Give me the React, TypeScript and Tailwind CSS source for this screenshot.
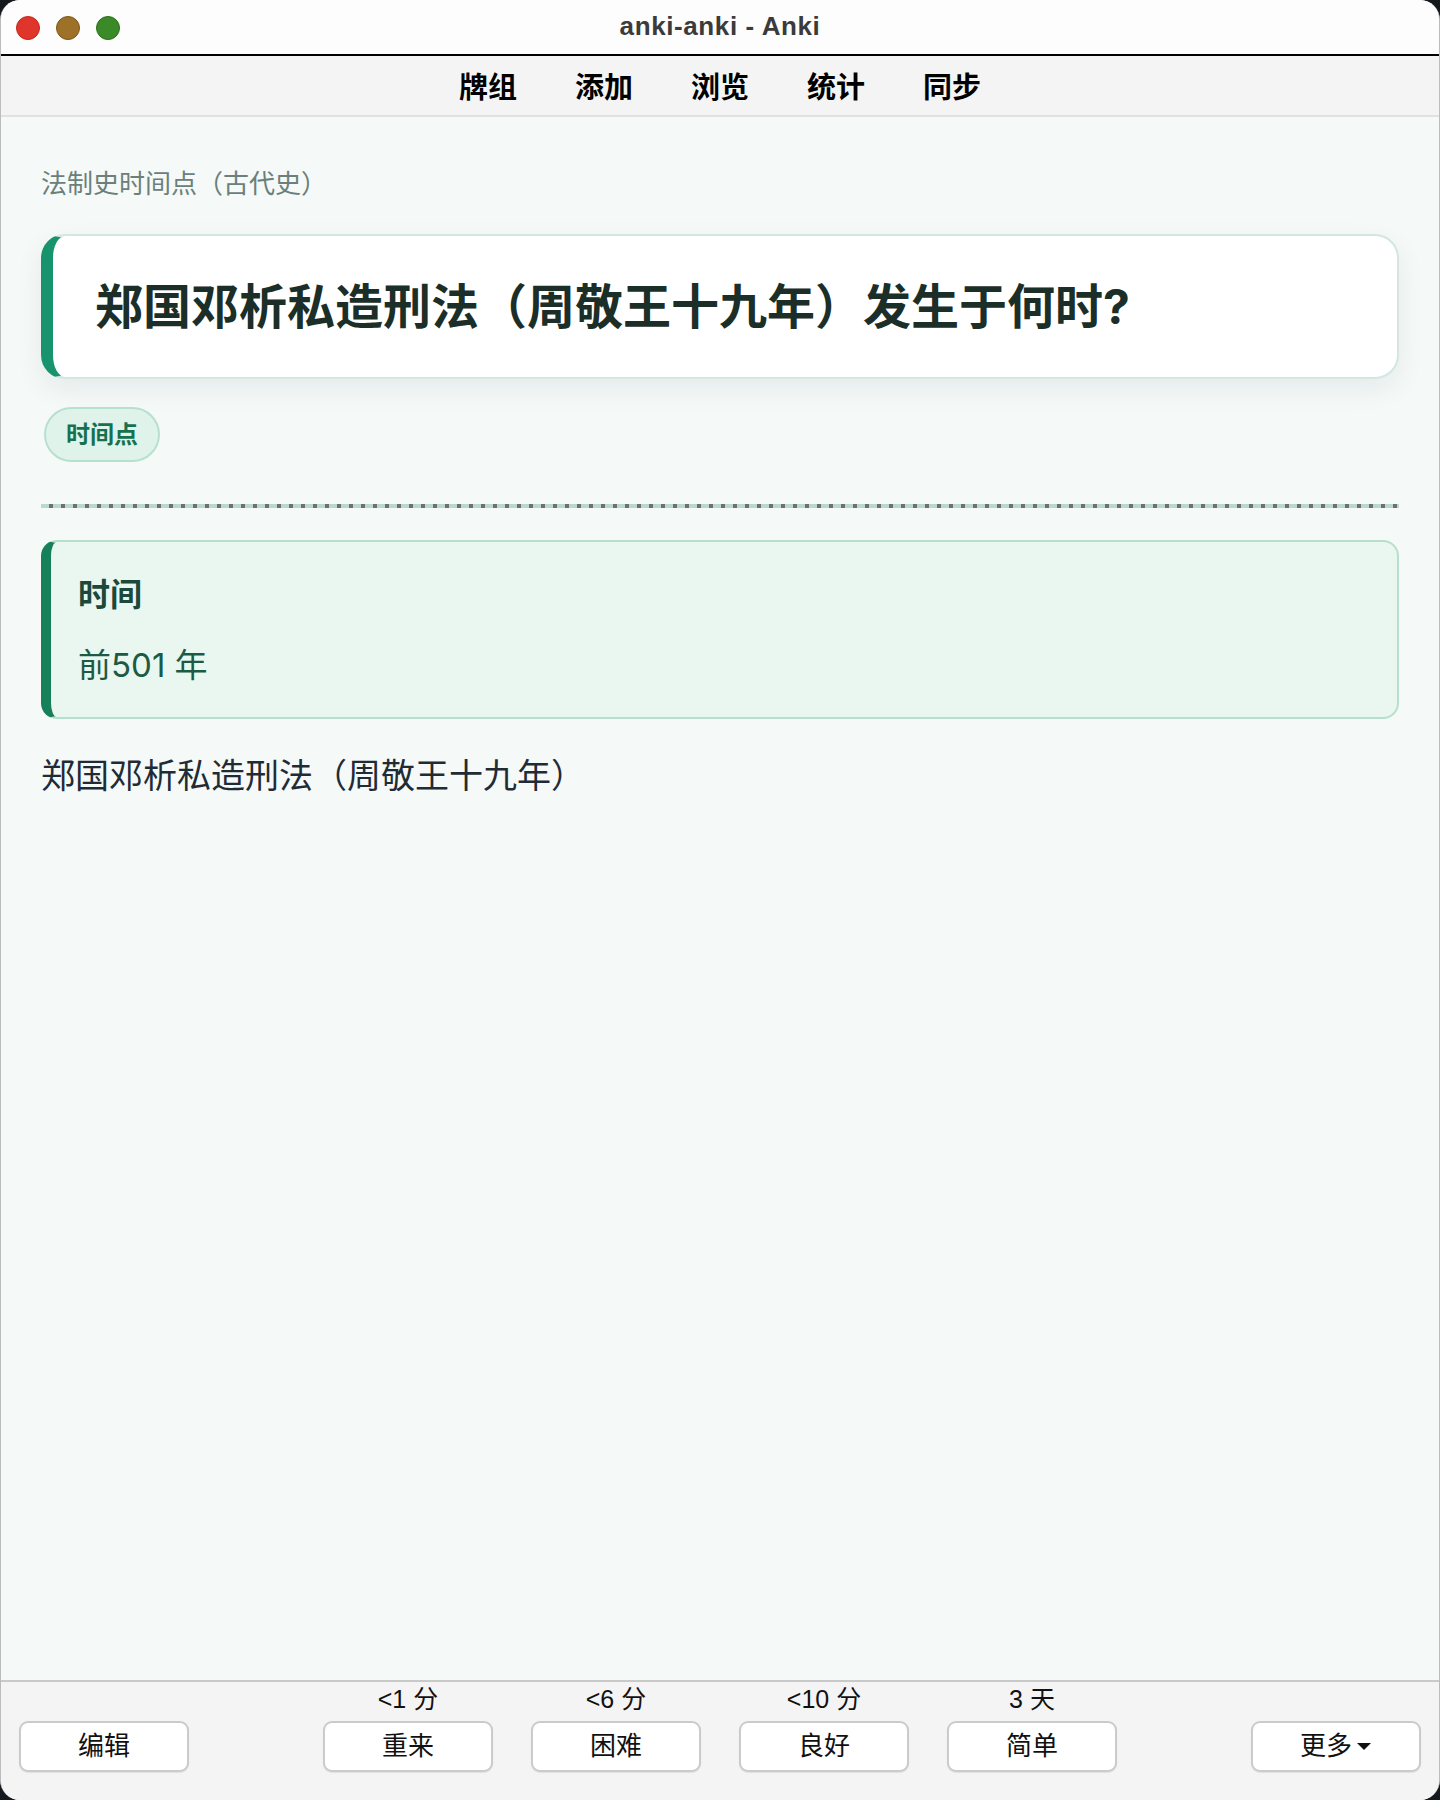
const toolbar = ['牌组', '添加', '浏览', '统计', '同步'];

const answers = [
  { label: '<1 分', text: '重来' },
  { label: '<6 分', text: '困难' },
  { label: '<10 分', text: '良好' },
  { label: '3 天', text: '简单' },
];

function Button({ children }: { children: React.ReactNode }) {
  return (
    <button className="w-[170px] h-[51px] flex items-center justify-center gap-2 bg-white border-2 border-[#cbcbcb] rounded-[9px] shadow-[0_1px_1px_rgba(0,0,0,0.08)] text-[26px] text-[#111] font-['Liberation_Sans','Noto_Sans_CJK_SC',sans-serif]">
      {children}
    </button>
  );
}

export default function App() {
  return (
    <div className="w-[1440px] h-[1800px] bg-[#15181f]">
      <div className="h-full flex flex-col rounded-[20px] overflow-hidden bg-white border-x border-[#bcbcbc]">
        {/* title bar */}
        <div className="h-[56px] shrink-0 relative flex items-center justify-center bg-[#fdfdfd] border-b-2 border-black">
          <div className="absolute left-[15px] top-[16px] flex gap-[16px]">
            <span className="w-[24px] h-[24px] rounded-full bg-[#e0352b] border border-[#c0281f]" />
            <span className="w-[24px] h-[24px] rounded-full bg-[#9d7128] border border-[#7d561a]" />
            <span className="w-[24px] h-[24px] rounded-full bg-[#3b8a28] border border-[#2c6e1d]" />
          </div>
          <span className="text-[26px] font-bold tracking-[0.6px] text-[#3b3b3b] pb-[2px] font-['Liberation_Sans',sans-serif]">
            anki-anki - Anki
          </span>
        </div>

        {/* toolbar */}
        <div className="h-[61px] shrink-0 flex items-center justify-center gap-[58px] bg-[#f4f4f4] border-b-2 border-[#e1e1e1]">
          {toolbar.map((t) => (
            <span key={t} className="text-[29px] font-bold text-black font-['Noto_Sans_CJK_SC',sans-serif]">
              {t}
            </span>
          ))}
        </div>

        {/* card */}
        <div className="flex-1 bg-[#f5f9f8] px-[40px] pt-[48px] font-['Inter','Noto_Sans_CJK_SC',sans-serif]">
          <div className="text-[26px] leading-[38px] text-[#6b807a]">法制史时间点（古代史）</div>

          <div className="mt-[31px] h-[145px] flex items-center bg-white rounded-[24px] border-2 border-[#d4e6e0] border-l-[12px] border-l-[#17946c] pl-[42px] shadow-[0_10px_28px_rgba(20,60,50,0.07)]">
            <h1 className="text-[48px] font-bold leading-[64px] text-[#1b2e27]">
              郑国邓析私造刑法（周敬王十九年）发生于何时?
            </h1>
          </div>

          <div className="mt-[28px] flex">
            <span className="ml-[3px] h-[55px] px-[20px] flex items-center rounded-full bg-[#dff3ea] border-2 border-[#b7e1ce] text-[24px] font-bold text-[#17704e]">
              时间点
            </span>
          </div>

          <div className="mt-[42px] h-[4px] bg-[image:repeating-linear-gradient(90deg,#b9d9ce_0_8px,#6f6f6f_8px_12px)]" />

          <div className="mt-[32px] h-[179px] flex flex-col justify-center gap-[22px] bg-[#eaf7f0] rounded-[16px] border-2 border-[#b6e0cb] border-l-[10px] border-l-[#15805a] pl-[27px]">
            <div className="text-[32px] leading-[48px] font-bold text-[#1b4a3a]">时间</div>
            <div className="text-[33px] leading-[48px] text-[#1d5a44]">前501 年</div>
          </div>

          <p className="mt-[33px] text-[34px] leading-[48px] text-[#1f2b35]">郑国邓析私造刑法（周敬王十九年）</p>
        </div>

        {/* answer bar */}
        <div className="h-[120px] shrink-0 flex items-end justify-between px-[18px] pb-[28px] bg-[#f4f4f4] border-t-2 border-[#c9c9c9]">
          <Button>编辑</Button>
          <div className="flex gap-[38px]">
            {answers.map((a) => (
              <div key={a.text} className="flex flex-col items-center gap-[9px]">
                <span className="text-[25px] leading-[26px] text-[#111] font-['Liberation_Sans','Noto_Sans_CJK_SC',sans-serif]">
                  {a.label}
                </span>
                <Button>{a.text}</Button>
              </div>
            ))}
          </div>
          <Button>
            <span>更多</span>
            <svg width="16" height="9" viewBox="0 0 16 9" className="ml-[-4px]">
              <path d="M1 1h14L8 8z" fill="#111" />
            </svg>
          </Button>
        </div>
      </div>
    </div>
  );
}
